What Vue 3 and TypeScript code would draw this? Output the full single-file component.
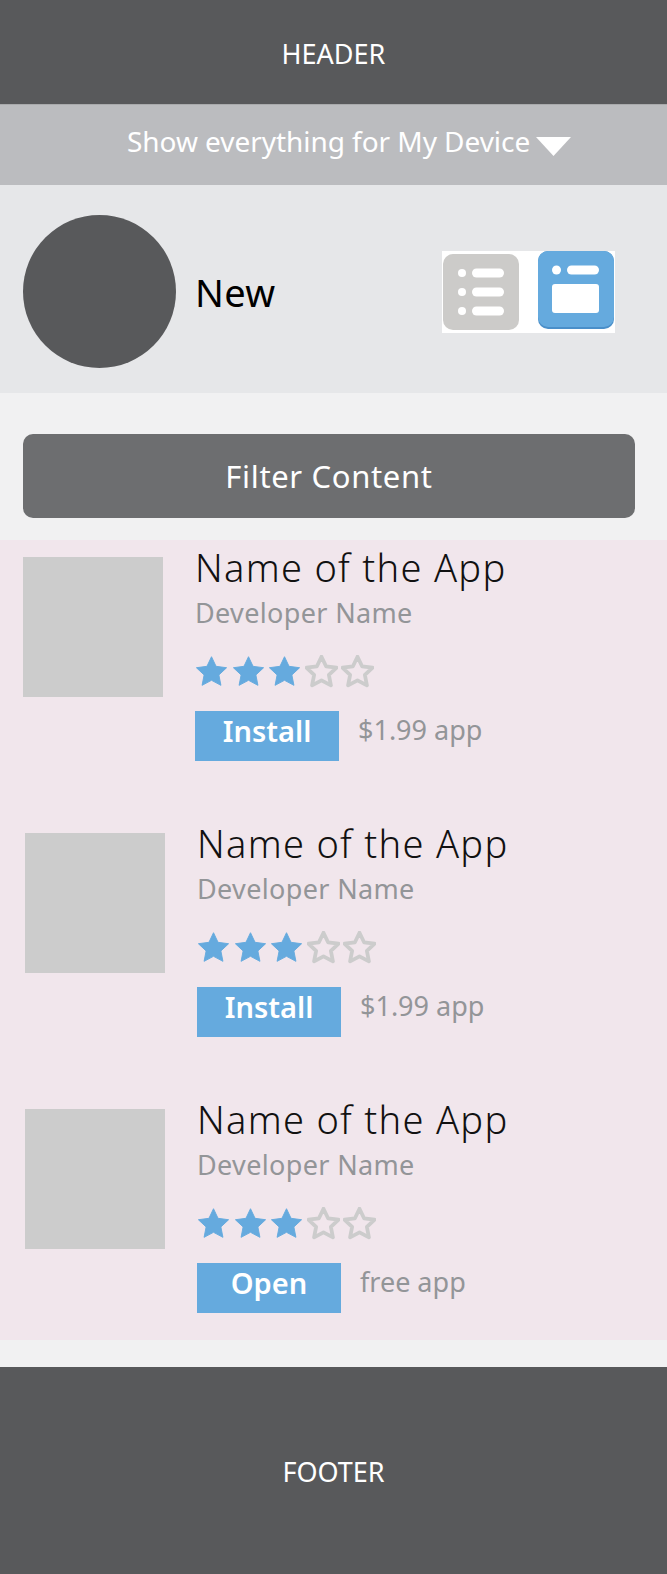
<template>
  <div class="page">
    <header class="header">HEADER</header>
    <div class="device-bar">
      <span class="device-label">Show everything for My Device</span>
      <svg class="caret" width="35" height="19" viewBox="0 0 35 19"><path d="M0 0H35L17.5 19Z" fill="#fff" /></svg>
    </div>
    <section class="category">
      <div class="avatar"></div>
      <div class="category-name">New</div>
      <div class="view-switch">
        <svg width="173" height="82" viewBox="0 0 173 82">
          <rect x="1" y="3" width="76" height="76" rx="10" fill="#cccbc9" />
          <g fill="#fff">
            <circle cx="20" cy="22" r="4" />
            <rect x="30" y="17.500" width="32" height="9" rx="4.500" />
            <circle cx="20" cy="41" r="4" />
            <rect x="30" y="36.500" width="32" height="9" rx="4.500" />
            <circle cx="20" cy="60" r="4" />
            <rect x="30" y="55.500" width="32" height="9" rx="4.500" />
          </g>
          <rect x="96" y="0" width="76" height="78" rx="10" fill="#4a8fc9" />
          <rect x="96" y="0" width="76" height="76" rx="10" fill="#65aade" />
          <g fill="#fff">
            <circle cx="114.500" cy="19" r="4.500" />
            <rect x="125" y="14.500" width="32" height="9" rx="4.500" />
            <rect x="110" y="33" width="47" height="29" rx="3" />
          </g>
        </svg>
      </div>
    </section>
    <div class="filter-wrap">
      <button class="filter-btn" type="button">Filter Content</button>
    </div>
    <section class="app-list">
      <article v-for="(app, i) in apps" :key="i" class="app-row" :class="{ shifted: i > 0 }">
        <div class="thumb"></div>
        <div class="app-info">
          <div class="app-name">Name of the App</div>
          <div class="app-dev">Developer Name</div>
          <div class="stars">
            <svg v-for="n in 5" :key="n" width="33" height="33" viewBox="1.500 1.500 21 21">
              <path
                d="M12 2.600l2.900 6.100 6.700.900-4.900 4.600 1.300 6.600-6-3.200-6 3.200 1.300-6.600-4.900-4.600 6.700-.900z"
                :fill="n <= 3 ? '#65aade' : 'none'"
                :stroke="n <= 3 ? '#65aade' : '#cccccc'"
                :stroke-width="n <= 3 ? 0.6 : 2.400"
                stroke-linejoin="round"
              />
            </svg>
          </div>
          <div class="app-actions">
            <button class="action-btn" type="button">{{ app.action }}</button>
            <span class="price">{{ app.price }}</span>
          </div>
        </div>
      </article>
    </section>
    <footer class="footer">FOOTER</footer>
  </div>
</template>

<script setup lang="ts">
interface AppItem {
  action: string
  price: string
}

const apps: AppItem[] = [
  { action: 'Install', price: '$1.99 app' },
  { action: 'Install', price: '$1.99 app' },
  { action: 'Open', price: 'free app' }
]
</script>

<style scoped>
.page {
  width: 667px;
  height: 1574px;
  background: #f1f1f2;
  font-family: "Noto Sans", "Open Sans", sans-serif;
  display: flex;
  flex-direction: column;
}

.header {
  height: 104px;
  box-sizing: border-box;
  padding-top: 2px;
  background: #58595b;
  color: #fff;
  font-size: 27px;
  display: flex;
  align-items: center;
  justify-content: center;
  flex-shrink: 0;
}

.device-bar {
  height: 80px;
  border-top: 1px solid #a9aaac;
  background: #bbbcbf;
  color: #fff;
  display: flex;
  align-items: center;
  padding-left: 127px;
  gap: 6px;
  flex-shrink: 0;
}

.device-label {
  font-size: 28px;
  letter-spacing: -0.05px;
  margin-top: -8px;
}

.caret {
  margin-top: 2px;
}

.category {
  height: 208px;
  box-sizing: border-box;
  background: #e6e7e9;
  display: flex;
  align-items: center;
  padding: 4px 52px 0 23px;
  flex-shrink: 0;
}

.avatar {
  width: 153px;
  height: 153px;
  border-radius: 50%;
  background: #58595b;
}

.category-name {
  margin-left: 19px;
  margin-top: 2px;
  font-size: 38px;
  letter-spacing: 0.4px;
  color: #000;
}

.view-switch {
  margin-left: auto;
  background: #fff;
  width: 173px;
  height: 82px;
  margin-top: 1px;
}

.view-switch svg {
  display: block;
}

.filter-wrap {
  padding: 41px 32px 22px 23px;
  flex-shrink: 0;
}

.filter-btn {
  display: block;
  width: 612px;
  height: 84px;
  border: 0;
  border-radius: 10px;
  background: #6d6e70;
  color: #fff;
  font-family: inherit;
  font-size: 31px;
  letter-spacing: 0.65px;
}

.app-list {
  height: 800px;
  background: #f1e6ec;
  flex-shrink: 0;
}

.app-row {
  display: flex;
  height: 276px;
  padding-left: 23px;
}

.app-row.shifted {
  padding-left: 25px;
}

.thumb {
  width: 140px;
  height: 140px;
  margin-top: 17px;
  background: #cccccc;
  flex-shrink: 0;
}

.app-info {
  margin-left: 32px;
  margin-top: 2px;
}

.app-name {
  font-size: 38px;
  line-height: 50px;
  font-weight: 300;
  letter-spacing: 1.3px;
  color: #111;
}

.app-dev {
  font-size: 27px;
  line-height: 38px;
  letter-spacing: 0.35px;
  color: #939598;
  margin-top: 2px;
}

.stars {
  display: flex;
  gap: 3.600px;
  margin-top: 23px;
}

.stars svg {
  display: block;
}

.app-actions {
  display: flex;
  align-items: flex-start;
  margin-top: 23px;
}

.action-btn {
  width: 144px;
  height: 50px;
  border: 0;
  background: #65aade;
  color: #fff;
  font-family: inherit;
  font-size: 29px;
  font-weight: 600;
  padding: 0 0 12px;
}

.price {
  margin-left: 19px;
  font-size: 27px;
  line-height: 38px;
  color: #939598;
}

.footer {
  margin-top: 27px;
  flex: 1;
  box-sizing: border-box;
  padding-top: 2px;
  background: #58595b;
  color: #fff;
  font-size: 27px;
  display: flex;
  align-items: center;
  justify-content: center;
}
</style>
